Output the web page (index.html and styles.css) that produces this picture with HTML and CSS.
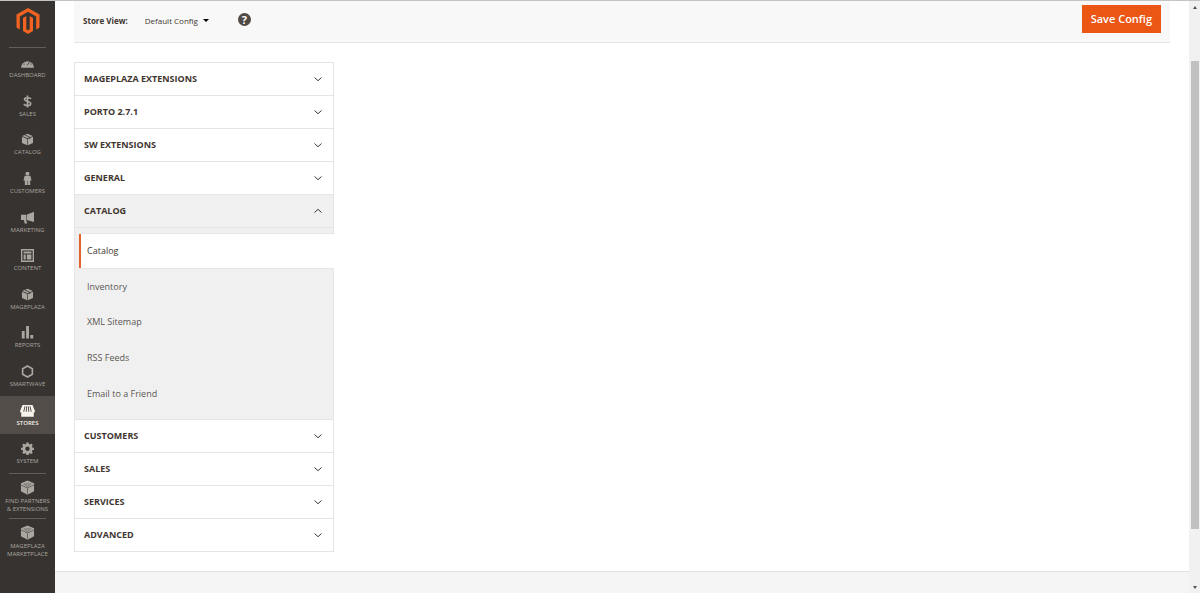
FILE: index.html
```
<!DOCTYPE html>
<html lang="en">
<head>
  <meta charset="UTF-8">
  <meta name="viewport" content="width=device-width, initial-scale=1.0">
  <title>Configuration / Settings / Stores / Magento Admin</title>
  <link rel="stylesheet" href="styles.css">
</head>
<body>

  <!-- Shared icons -->
  <svg class="icon-defs" width="0" height="0" aria-hidden="true">
    <symbol id="box" viewBox="0 0 16 16">
      <path d="M8 1 14.500 3.600 8 6.600 1.500 3.600zM1.200 4.500 7.600 7.400V15.200L1.200 12.200zM14.800 4.500 8.400 7.400v7.800l6.400-3z"/>
      <path class="cut" d="m4.800 2.500 6 2.700v2.200"/>
    </symbol>
    <symbol id="brick" viewBox="0 0 16 16">
      <path d="M8 .500 15 3.500V12L8 15.700 1 12V3.500z"/>
      <path class="cut thin" d="M1 5.200 8 8.500l7-3.300M8 8.500v7M4 3.800l2 .900 2-.900M8 3.800l2 .900 2-.900M6 5.900l2 .800 2-.800"/>
    </symbol>
    <symbol id="chevron" viewBox="0 0 10 10">
      <path d="m1.500 3.500 3.500 3.200 3.500-3.200" fill="none" stroke="currentColor"/>
    </symbol>
  </svg>

  <div class="admin">

    <!-- Left menu -->
    <nav class="menu">
      <a class="logo" href="#" aria-label="Magento Admin">
        <svg viewBox="0 0 24 26"><path d="M12 0 23.500 6.500v13l-3.300 1.900V8.400L12 3.800 3.800 8.400v13L.500 19.500v-13zM7 10l3.300-1.900v13.100l1.700 1 1.700-1V8.100L17 10v13.100L12 26l-5-2.900z"/></svg>
      </a>

      <ul class="menu-list">
        <li><a href="#">
          <svg viewBox="0 0 16 16"><path d="M0 14.500A8 8 0 1 1 16 14.500z"/><path class="cut" d="m7.500 11.500 3.500-5M3 10h1.500M11.500 10H13M4.800 6l.900.900M8 4.500v1"/></svg>
          <span>Dashboard</span></a></li>
        <li><a href="#">
          <svg viewBox="0 0 16 16"><path class="line" d="M12 5C11.500 3 4.300 2.500 4.300 5.300 4.300 8.200 12 7.400 12 10.800 12 14 4.300 13.500 3.800 10.800M8 .500v15"/></svg>
          <span>Sales</span></a></li>
        <li><a href="#">
          <svg viewBox="0 0 16 16"><use href="#box"/></svg>
          <span>Catalog</span></a></li>
        <li><a href="#">
          <svg viewBox="0 0 16 16"><circle cx="8" cy="2" r="2.400"/><path d="M4.500 4.500h7l1.500 6h-1.700v5.500H8.300V11h-.600v5H4.700v-5.500H3z"/></svg>
          <span>Customers</span></a></li>
        <li><a href="#">
          <svg viewBox="0 0 16 16"><path d="M16 1v12.500L7 11V4.500zM6.300 4.700v6.300l1.400 4.500H4.500L3.500 11H0V4.700z"/></svg>
          <span>Marketing</span></a></li>
        <li><a href="#">
          <svg viewBox="0 0 16 16"><path fill-rule="evenodd" d="M0 0h16v16H0zM1.700 1.700v12.600h12.600V1.700zM3.200 3.200h9.600v2.300H3.200zM3.200 6.800h2.600v6H3.200zM7.200 6.800h5.600v6H7.200z"/></svg>
          <span>Content</span></a></li>
        <li><a href="#">
          <svg viewBox="0 0 16 16"><use href="#box"/></svg>
          <span>Mageplaza</span></a></li>
        <li><a href="#">
          <svg viewBox="0 0 16 16"><path d="M1 6h3.500v9.500H1zM6.300 0h3.500v15.500H6.300zM11.500 11H15v4.500h-3.500z"/></svg>
          <span>Reports</span></a></li>
        <li><a href="#">
          <svg viewBox="0 0 16 16"><path class="line" d="m8 1.200 6 3.400v6.800l-6 3.400-6-3.400V4.600z"/></svg>
          <span>Smartwave</span></a></li>
        <li class="active"><a href="#">
          <svg viewBox="0 0 18 15"><path d="M3 1h12l3 7.500c0 1-1 1.500-1.500 1.500V15h-15v-5C1 10 0 9.500 0 8.500z"/><path class="cut" d="M6 2.500 4.500 9M8 2.500 7.500 9M10 2.500l.500 6.500M12 2.500 13.500 9"/></svg>
          <span>Stores</span></a></li>
        <li><a href="#">
          <svg viewBox="0 0 16 16"><path fill-rule="evenodd" d="M6.700.500h2.600l.400 2.100 1.200.500 1.800-1.200 1.800 1.800-1.200 1.800.500 1.200 2.100.400v2.600l-2.100.400-.500 1.200 1.200 1.800-1.800 1.800-1.800-1.200-1.200.500-.400 2.100H6.700l-.400-2.100-1.200-.500-1.800 1.200-1.800-1.800 1.200-1.800-.500-1.200-2.100-.400V7.100l2.100-.400.500-1.200-1.200-1.800 1.800-1.800 1.800 1.200 1.200-.500zM8 5.600a2.700 2.700 0 1 0 0 5.400 2.700 2.700 0 0 0 0-5.400z"/></svg>
          <span>System</span></a></li>
      </ul>

      <ul class="menu-extra">
        <li><a href="#">
          <svg viewBox="0 0 16 16"><use href="#brick"/></svg>
          <span>Find Partners<br>&amp; Extensions</span></a></li>
        <li><a href="#">
          <svg viewBox="0 0 16 16"><use href="#brick"/></svg>
          <span>Mageplaza<br>Marketplace</span></a></li>
      </ul>
    </nav>

    <!-- Page -->
    <div class="page">
      <header class="toolbar">
        <label for="store-view">Store View:</label>
        <div class="store-select">
          <select id="store-view">
            <option>Default Config</option>
          </select>
        </div>
        <a class="help" href="#" aria-label="Help">?</a>
        <button class="save" type="button">Save Config</button>
      </header>

      <main class="config">
        <details><summary>Mageplaza Extensions <svg><use href="#chevron"/></svg></summary></details>
        <details><summary>Porto 2.7.1 <svg><use href="#chevron"/></svg></summary></details>
        <details><summary>SW Extensions <svg><use href="#chevron"/></svg></summary></details>
        <details><summary>General <svg><use href="#chevron"/></svg></summary></details>
        <details open>
          <summary>Catalog <svg><use href="#chevron"/></svg></summary>
          <ul class="items">
            <li><a class="current" href="#">Catalog</a></li>
            <li><a href="#">Inventory</a></li>
            <li><a href="#">XML Sitemap</a></li>
            <li><a href="#">RSS Feeds</a></li>
            <li><a href="#">Email to a Friend</a></li>
          </ul>
        </details>
        <details><summary>Customers <svg><use href="#chevron"/></svg></summary></details>
        <details><summary>Sales <svg><use href="#chevron"/></svg></summary></details>
        <details><summary>Services <svg><use href="#chevron"/></svg></summary></details>
        <details><summary>Advanced <svg><use href="#chevron"/></svg></summary></details>
      </main>

      <footer class="footer"></footer>
    </div>

    <!-- Scroll track -->
    <div class="scroll">
      <span class="arrow up"></span>
      <span class="thumb"></span>
      <span class="arrow down"></span>
    </div>
  </div>

</body>
</html>
```
FILE: styles.css
```
* {
  box-sizing: border-box;
}

body {
  margin: 0;
  font-family: "Open Sans", "Noto Sans", sans-serif;
  font-size: 9px;
  color: #41362f;
  background: #fff;
}

a {
  color: inherit;
  text-decoration: none;
}

ul {
  list-style: none;
  margin: 0;
  padding: 0;
}

.icon-defs {
  position: absolute;
}

.admin {
  display: flex;
  min-height: 100vh;
  border-top: 1px solid #c4c4c4;
}

/* Left menu */
.menu {
  flex: 0 0 55px;
  background: #373330;
  color: #aaa6a0;
}

.menu-list {
  display: grid;
  grid-template-rows: 1px;
  grid-auto-rows: 1fr;
  height: 426px;
}

.menu-list::before,
.menu-extra li::before {
  content: "";
  display: block;
  height: 1px;
  margin: 0 9px;
  background: #655e58;
}

.menu a {
  display: flex;
  flex-direction: column;
  align-items: center;
  height: 100%;
  padding-top: 8px;
  font-size: 6px;
  line-height: 8px;
  text-align: center;
  text-transform: uppercase;
}

.menu .logo {
  height: 46px;
  padding-top: 7px;
}

.menu .logo svg {
  width: 24px;
  height: 26px;
  fill: #f26322;
}

.menu li svg {
  width: 13px;
  height: 13px;
  margin-bottom: 2px;
  fill: #aaa6a0;
}

.menu .line {
  fill: none;
  stroke: #aaa6a0;
  stroke-width: 2;
}

.cut {
  fill: none;
  stroke: #373330;
  stroke-width: 1;
}

.cut.thin {
  stroke: #67625e;
}

.menu .active {
  background: #524d49;
  color: #f7f3eb;
  font-weight: 600;
}

.menu .active svg {
  width: 15px;
  fill: #f7f3eb;
}

.menu-extra li {
  height: 45px;
}

.menu-extra li a {
  padding-top: 6px;
}

.menu-extra li svg {
  width: 15px;
  height: 15px;
}

/* Page */
.page {
  flex: 1;
  display: flex;
  flex-direction: column;
}

.toolbar {
  display: flex;
  align-items: flex-start;
  height: 42px;
  margin: 0 19px;
  padding: 4px 9px 0;
  background: #f8f8f8;
  border-bottom: 1px solid #e6e6e6;
  font-size: 8px;
}

.toolbar label {
  margin-right: 17px;
  font-weight: 700;
  line-height: 32px;
}

.store-select {
  display: flex;
  align-items: center;
  height: 31px;
}

.store-select select {
  appearance: none;
  padding: 0 12px 0 0;
  border: 0;
  background: none;
  color: inherit;
  font: inherit;
}

.store-select::after {
  content: "";
  margin-left: -8px;
  border: 3px solid transparent;
  border-top-color: #000;
  border-bottom: 0;
}

.help {
  width: 13px;
  height: 13px;
  margin: 8px 0 0 29px;
  border-radius: 50%;
  background: #514943;
  color: #fff;
  font-size: 11px;
  font-weight: 700;
  line-height: 13px;
  text-align: center;
}

.save {
  height: 28px;
  margin-left: auto;
  padding: 0 9px 2px;
  border: 0;
  background: #eb5614;
  color: #fff;
  font-family: inherit;
  font-size: 11px;
  font-weight: 600;
}

/* Config sections */
.config {
  width: 260px;
  margin: 19px;
  border: 1px solid #e6e6e6;
}

.config details + details {
  border-top: 1px solid #e6e6e6;
}

.config summary {
  display: flex;
  align-items: center;
  justify-content: space-between;
  height: 32px;
  padding: 0 10px 1px 9px;
  font-weight: 700;
  text-transform: uppercase;
}

.config summary svg {
  width: 10px;
  height: 10px;
}

.config details[open] {
  background: #f0f0f0;
}

.config details[open] summary {
  height: 33px;
  border-bottom: 1px solid #e6e6e6;
}

.config details[open] summary svg {
  transform: rotate(180deg);
}

.items {
  display: grid;
  grid-auto-rows: 1fr;
  height: 191px;
  padding: 5px 0 8px;
}

.items a {
  display: flex;
  align-items: center;
  height: 100%;
  margin-left: 4px;
  padding-left: 8px;
  color: #5c5753;
}

.items .current {
  margin-right: -1px;
  border-top: 1px solid #e6e6e6;
  border-bottom: 1px solid #e6e6e6;
  background: #fff;
  box-shadow: inset 2px 0 #e2622f;
  color: #41362f;
}

.footer {
  flex: 1;
  background: #f5f5f5;
  border-top: 1px solid #e3e3e3;
}

/* Scroll track */
.scroll {
  flex: 0 0 11px;
  display: flex;
  flex-direction: column;
  align-items: center;
  padding: 5px 0 4px;
  background: #f1f1f1;
}

.thumb {
  width: 8px;
  height: 79vh;
  margin: 52px 0 auto;
  background: #c1c1c1;
}

.arrow {
  border: 2px solid transparent;
}

.arrow.up {
  border-top: 0;
  border-bottom: 3px solid #505050;
}

.arrow.down {
  border-bottom: 0;
  border-top: 3px solid #505050;
}
```
